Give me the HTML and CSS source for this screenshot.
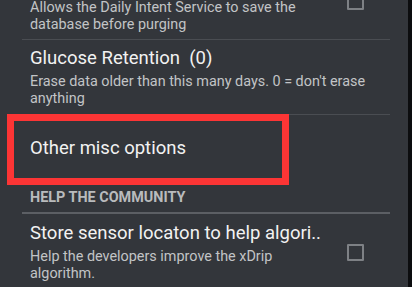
FILE: index.html
```html
<!DOCTYPE html>
<html lang="en">
<head>
    <meta charset="UTF-8">
    <meta name="viewport" content="width=device-width, initial-scale=1.0">
    <title>Settings</title>
    <link rel="stylesheet" href="styles.css">
</head>
<body>
    <div class="screen">
        <div class="prefs">
            <div class="pref pref-first">
                <div class="pref-text">
                    <div class="pref-summary">Allows the Daily Intent Service to save the database before purging</div>
                </div>
                <div class="checkbox"></div>
            </div>

            <div class="pref">
                <div class="pref-text">
                    <div class="pref-title">Glucose Retention&nbsp; (0)</div>
                    <div class="pref-summary">Erase data older than this many days. 0 = don't erase anything</div>
                </div>
            </div>

            <div class="pref pref-single highlight">
                <div class="pref-text">
                    <div class="pref-title">Other misc options</div>
                </div>
            </div>

            <div class="category">HELP THE COMMUNITY</div>

            <div class="pref pref-last">
                <div class="pref-text">
                    <div class="pref-title">Store sensor locaton to help algori..</div>
                    <div class="pref-summary">Help the developers improve the xDrip algorithm.</div>
                </div>
                <div class="checkbox"></div>
            </div>
        </div>
        <div class="edge"></div>
    </div>
</body>
</html>
```

FILE: styles.css
```css
* {
    box-sizing: border-box;
    margin: 0;
    padding: 0;
    font-family: Roboto, "Noto Sans", sans-serif;
}

body {
    background-color: #33363b;
    width: 412px;
    height: 287px;
    overflow: hidden;
}

.screen {
    display: flex;
    height: 287px;
}

.prefs {
    flex: 1;
    margin-top: -36px;
    padding: 0 18px 0 22px;
}

.edge {
    width: 4px;
    background-color: #0c0d0f;
}

.pref {
    display: flex;
    align-items: center;
    padding: 8px 0 7px 8px;
    border-bottom: 1px solid #4a4d52;
}

.pref-text {
    flex: 1;
    padding-right: 20px;
}

.pref-title {
    font-size: 18.5px;
    line-height: 21px;
    color: #f2f2f2;
    white-space: nowrap;
}

.pref-summary {
    font-size: 14.4px;
    line-height: 16.5px;
    color: #c2c4c6;
    margin-top: 5px;
}

.pref-first {
    padding-top: 36px;
    padding-bottom: 6px;
}

.pref-first .pref-summary {
    margin-top: 0;
}

.pref-first .checkbox {
    align-self: flex-start;
    margin-top: -7px;
}

.checkbox {
    width: 17px;
    height: 17px;
    margin-right: 26px;
    border: 2px solid #7e8185;
    border-radius: 1px;
    flex-shrink: 0;
}

.pref-single {
    min-height: 67px;
    padding-top: 0;
    padding-bottom: 0;
    border-bottom: none;
}

.pref-last {
    border-bottom: none;
    padding-top: 9px;
}

.highlight {
    position: relative;
}

/* red annotation box drawn over the row */
.highlight::after {
    content: "";
    box-sizing: border-box;
    position: absolute;
    left: -15px;
    top: -1px;
    width: 282px;
    height: 71px;
    border: 7px solid #fc3535;
}

.category {
    font-size: 14.4px;
    line-height: 16.5px;
    font-weight: bold;
    color: #b9bbbd;
    padding: 8px 0 5.5px 8px;
    border-bottom: 2px solid #5c5f64;
}
```
